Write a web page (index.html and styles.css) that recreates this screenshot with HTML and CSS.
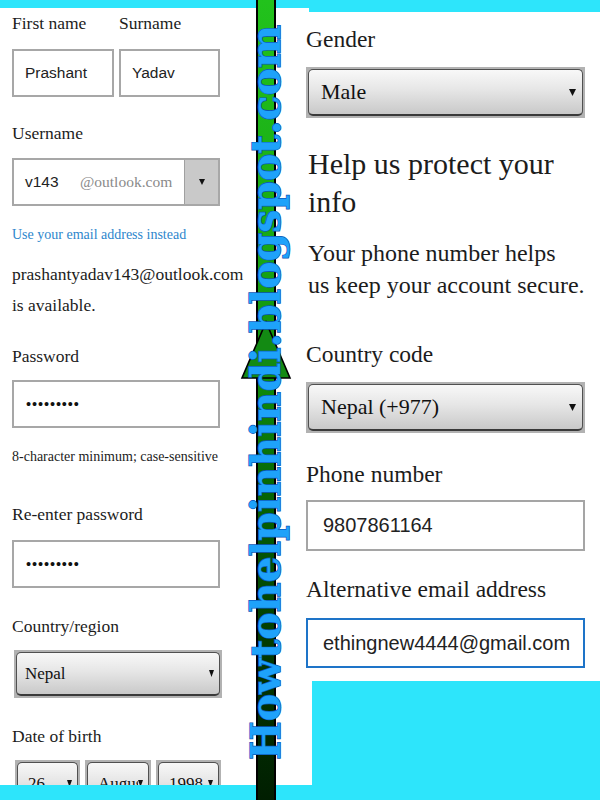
FILE: index.html
```html
<!DOCTYPE html>
<html lang="en">
<head>
<meta charset="utf-8">
<title>Create account</title>
<link rel="stylesheet" href="styles.css">
</head>
<body>
<div class="page">
  <div class="left">
    <div class="cyan left-top"></div>
    <div class="left-body">
      <div class="name-grid">
        <div class="lbl">First name</div>
        <div class="lbl">Surname</div>
        <div class="inp">Prashant</div>
        <div class="inp">Yadav</div>
      </div>
      <div class="lbl gap-user">Username</div>
      <div class="combo">
        <div class="combo-main"><span class="combo-name">v143</span><span class="combo-domain">@outlook.com</span></div>
        <div class="combo-btn"><svg class="caret" width="6" height="6" viewBox="0 0 6 6"><path d="M0 0H6L3 6Z"/></svg></div>
      </div>
      <div class="hint link gap-link">Use your email address instead</div>
      <div class="avail">prashantyadav143@outlook.com<br>is available.</div>
      <div class="lbl gap-pass">Password</div>
      <div class="inp wide dots gap-pass-inp">•••••••••</div>
      <div class="hint gap-hint">8-character minimum; case-sensitive</div>
      <div class="lbl gap-repass">Re-enter password</div>
      <div class="inp wide dots gap-repass-inp">•••••••••</div>
      <div class="lbl gap-country">Country/region</div>
      <div class="select wide gap-country-sel">
        <div class="face"><span class="face-text">Nepal</span><svg class="caret" width="5" height="7" viewBox="0 0 5 7"><path d="M0 0H5L2.5 7Z"/></svg></div>
      </div>
      <div class="lbl gap-dob">Date of birth</div>
      <div class="dob">
        <div class="select dob-day"><div class="face"><span class="face-text">26</span><svg class="caret" width="5" height="7" viewBox="0 0 5 7"><path d="M0 0H5L2.5 7Z"/></svg></div></div>
        <div class="select dob-month"><div class="face"><span class="face-text">August</span><svg class="caret" width="5" height="7" viewBox="0 0 5 7"><path d="M0 0H5L2.5 7Z"/></svg></div></div>
        <div class="select dob-year"><div class="face"><span class="face-text">1998</span><svg class="caret" width="5" height="7" viewBox="0 0 5 7"><path d="M0 0H5L2.5 7Z"/></svg></div></div>
      </div>
    </div>
    <div class="cyan left-bottom"></div>
  </div>

  <div class="bar"></div>

  <div class="right">
    <div class="cyan right-top"></div>
    <div class="cyan right-top2"></div>
    <div class="right-body">
      <div class="r-lbl gap-gender">Gender</div>
      <div class="select r-sel gap-gender-sel">
        <div class="face"><span class="face-text">Male</span><svg class="caret" width="7" height="7" viewBox="0 0 7 7"><path d="M0 0H7L3.5 7Z"/></svg></div>
      </div>
      <h1 class="heading">Help us protect your<br>info</h1>
      <p class="para">Your phone number helps<br>us keep your account secure.</p>
      <div class="r-lbl gap-code">Country code</div>
      <div class="select r-sel gap-code-sel">
        <div class="face"><span class="face-text">Nepal (+977)</span><svg class="caret" width="7" height="7" viewBox="0 0 7 7"><path d="M0 0H7L3.5 7Z"/></svg></div>
      </div>
      <div class="r-lbl gap-phone">Phone number</div>
      <div class="r-inp gap-phone-inp">9807861164</div>
      <div class="r-lbl gap-alt">Alternative email address</div>
      <div class="r-inp focus gap-alt-inp">ethingnew4444@gmail.com</div>
    </div>
    <div class="right-bottom">
      <div class="rb-gap"><div class="cyan rb-gap-fill"></div></div>
      <div class="cyan rb-fill"></div>
    </div>
  </div>

  <svg class="arrow" width="54" height="62" viewBox="0 0 54 62"><polygon points="26,2 2,58 50,58" fill="#138a13" stroke="#000" stroke-width="1.6" stroke-linejoin="miter"/></svg>
  <div class="watermark">Howtohelpinhindi.blogspot.com</div>
</div>
</body>
</html>
```

FILE: styles.css
```css
* { box-sizing: border-box; }
html, body { margin: 0; padding: 0; }
body {
  width: 600px;
  height: 800px;
  overflow: hidden;
  background: #fff;
  font-family: "Liberation Serif", "Times New Roman", serif;
  color: #1c1c1c;
}
.page { position: relative; display: flex; width: 600px; height: 800px; }
.cyan { background: #2de5fb; }

/* ---------- left column ---------- */
.left { width: 256px; display: flex; flex-direction: column; }
.left-top { height: 8px; }
.left-bottom { height: 15px; }
.left-body { flex: 1; overflow: hidden; padding-left: 12px; }

.lbl { font-size: 17.5px; line-height: 20px; }
.hint { font-size: 14px; line-height: 16px; }
.link { color: #2d86cc; }

.name-grid {
  display: grid;
  grid-template-columns: 102px 101px;
  column-gap: 5px;
  row-gap: 16px;
  margin-top: 5px;
}
.inp {
  height: 48px;
  border: 2px solid #a7a7a7;
  display: flex;
  align-items: center;
  padding-left: 11px;
  font-family: "Liberation Sans", Arial, sans-serif;
  font-size: 15.5px;
  color: #222;
  background: #fff;
}
.wide { width: 208px; }
.dots { padding-left: 12px; font-size: 14.5px; letter-spacing: 0.9px; color: #111; }

.combo {
  width: 208px;
  height: 48px;
  border: 2px solid #a7a7a7;
  display: flex;
  margin-top: 15px;
}
.combo-main {
  flex: 1;
  display: flex;
  align-items: center;
  padding-left: 11px;
}
.combo-name {
  width: 55px;
  font-family: "Liberation Sans", Arial, sans-serif;
  font-size: 15.5px;
  color: #222;
}
.combo-domain { font-size: 15.5px; color: #8a8a8a; }
.combo-btn {
  width: 34px;
  background: #c9c9c9;
  border-left: 1px solid #a0a0a0;
  display: flex;
  align-items: center;
  justify-content: center;
}
.caret { display: block; fill: #111; }

.avail { font-size: 17.5px; line-height: 31px; margin-top: 16px; }

.gap-user { margin-top: 26px; }
.gap-link { margin-top: 21px; }
.gap-pass { margin-top: 25px; }
.gap-pass-inp { margin-top: 14px; }
.gap-hint { margin-top: 21px; }
.gap-repass { margin-top: 39px; }
.gap-repass-inp { margin-top: 16px; }
.gap-country { margin-top: 28px; }
.gap-country-sel { margin-top: 14px; margin-left: 2px; }
.gap-dob { margin-top: 28px; }

/* select look-alikes */
.select {
  height: 48px;
  padding: 2px;
  background: #b2b2b2;
}
.face {
  height: 100%;
  border: 1px solid #505050;
  border-bottom: 2px solid #3a3a3a;
  border-radius: 5px;
  background: linear-gradient(#f8f8f8 0%, #e6e6e6 45%, #c9c9c9 100%);
  display: flex;
  align-items: center;
  padding: 0 5px 0 8px;
  font-size: 17px;
  color: #111;
}
.face-text { flex: 1; overflow: hidden; white-space: nowrap; }

.dob { display: flex; gap: 5px; margin-top: 14px; margin-left: 3px; }
.dob-day { width: 65px; }
.dob-month { width: 66px; }
.dob-year { width: 65px; }
.dob .face-text { padding-left: 2px; }

/* ---------- middle bar ---------- */
.bar {
  width: 20px;
  border-left: 2px solid #000;
  border-right: 2px solid #000;
  background: linear-gradient(#22c21c 0%, #19a915 30%, #0f8a0d 48%, #056405 62%, #023c02 80%, #011e01 100%);
}

/* ---------- right column ---------- */
.right { flex: 1; display: flex; flex-direction: column; }
.right-top { height: 8px; }
.right-top2 { height: 4px; margin-left: 33px; }
.right-body { flex: 1; padding: 0 15px 0 30px; }
.right-bottom { height: 119px; display: flex; }
.rb-gap { width: 36px; display: flex; flex-direction: column; justify-content: flex-end; }
.rb-gap-fill { height: 15px; }
.rb-fill { flex: 1; }

.r-lbl { font-size: 23.5px; line-height: 26px; }
.r-sel { height: 51px; }
.r-sel .face { font-size: 22px; padding: 0 6px 0 12px; }

.heading {
  font-size: 30px;
  line-height: 38px;
  font-weight: normal;
  margin: 27px 0 0 2px;
}
.para {
  font-size: 24px;
  line-height: 31.5px;
  margin: 17px 0 0 2px;
}
.r-inp {
  height: 51px;
  border: 2px solid #a5a5a5;
  display: flex;
  align-items: center;
  padding-left: 15px;
  font-family: "Liberation Sans", Arial, sans-serif;
  font-size: 20px;
  color: #222;
}
.r-inp.focus { border-color: #1e74c8; height: 50px; }

.gap-gender { margin-top: 14px; }
.gap-gender-sel { margin-top: 15px; }
.gap-code { margin-top: 40px; }
.gap-code-sel { margin-top: 15px; }
.gap-phone { margin-top: 28px; }
.gap-phone-inp { margin-top: 13px; }
.gap-alt { margin-top: 25px; }
.gap-alt-inp { margin-top: 16px; }

/* ---------- overlays ---------- */
.arrow { position: absolute; left: 240px; top: 320px; z-index: 2; }
.watermark {
  position: absolute;
  left: 0;
  top: 0;
  z-index: 3;
  white-space: nowrap;
  font-family: "DejaVu Serif", serif;
  font-weight: bold;
  font-size: 41px;
  line-height: 44px;
  color: #1ea2fa;
  -webkit-text-stroke: 1.4px #0b55b5;
  paint-order: stroke fill;
  transform-origin: 0 0;
  transform: translate(244px, 760px) rotate(-90deg);
}
```
